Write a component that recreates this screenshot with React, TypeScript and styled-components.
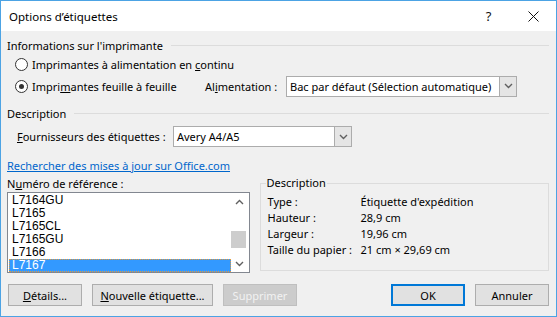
import React from "react";
import styled, { createGlobalStyle } from "styled-components";

const UI_FONT = `"Noto Sans", "Liberation Sans", sans-serif`;

const GlobalStyle = createGlobalStyle`
  * {
    box-sizing: border-box;
  }

  body {
    margin: 0;
    background: #ffffff;
    font-family: ${UI_FONT};
    font-size: 11px;
    color: #000000;
  }
`;

const Window = styled.div`
  width: 557px;
  height: 317px;
  border: 1px solid #4ca3e4;
  display: flex;
  flex-direction: column;
  background: #f0f0f0;
`;

const TitleBar = styled.header`
  height: 30px;
  background: #ffffff;
  display: flex;
  align-items: center;
  padding-left: 8px;
  font-size: 11.5px;
`;

const Title = styled.span`
  flex: 1;
`;

const TitleButton = styled.div`
  width: 45px;
  height: 30px;
  display: flex;
  align-items: center;
  justify-content: center;
  font-size: 13px;
  color: #111;
`;

const Body = styled.main`
  flex: 1;
  display: flex;
  flex-direction: column;
  padding: 0 7px 0 6px;
`;

const GroupHeader = styled.div<{ top: number }>`
  height: 16px;
  margin-top: ${(p) => p.top}px;
  display: flex;
  align-items: center;

  &::after {
    content: "";
    flex: 1;
    height: 1px;
    margin-left: 8px;
    background: #dcdcdc;
  }
`;

const Row = styled.div<{ h: number; indent?: number }>`
  height: ${(p) => p.h}px;
  display: flex;
  align-items: center;
  padding-left: ${(p) => p.indent || 0}px;
`;

const RadioLabel = styled.label<{ w?: number }>`
  display: flex;
  align-items: center;
  gap: 4px;
  width: ${(p) => (p.w ? `${p.w}px` : "auto")};
`;

const RadioCircle = styled.span<{ checked?: boolean }>`
  width: 13px;
  height: 13px;
  border-radius: 50%;
  border: 1px solid #333333;
  background: #ffffff;
  display: flex;
  align-items: center;
  justify-content: center;

  &::after {
    content: "";
    width: 5px;
    height: 5px;
    border-radius: 50%;
    background: ${(p) => (p.checked ? "#333333" : "transparent")};
  }
`;

const FieldLabel = styled.span<{ w: number }>`
  width: ${(p) => p.w}px;
`;

const Combo = styled.div<{ w: number }>`
  width: ${(p) => p.w}px;
  height: 21px;
  border: 1px solid #acacac;
  background: #ffffff;
  display: flex;
  align-items: stretch;
`;

const ComboText = styled.span`
  flex: 1;
  padding-left: 3px;
  display: flex;
  align-items: center;
`;

const ComboArrow = styled.span`
  width: 17px;
  background: #e5e5e5;
  border-left: 1px solid #acacac;
  display: flex;
  align-items: center;
  justify-content: center;
`;

const Link = styled.a`
  color: #0066cc;
  text-decoration: underline;
  height: 16px;
  margin-top: 10px;
  display: flex;
  align-items: center;
  align-self: flex-start;
`;

const Lower = styled.section`
  display: flex;
  gap: 10px;
  margin-top: 2px;
`;

const LeftColumn = styled.div`
  width: 243px;
  display: flex;
  flex-direction: column;
`;

const Caption = styled.div`
  height: 16px;
  display: flex;
  align-items: center;
`;

const ListBox = styled.div`
  margin-top: 1px;
  height: 81px;
  border: 1px solid #828790;
  background: #ffffff;
  display: flex;
`;

const Items = styled.ul`
  flex: 1;
  list-style: none;
  margin: 0;
  padding: 1px 0 0 1px;
  font-family: "Liberation Sans", sans-serif;
  font-size: 12px;
`;

const Item = styled.li<{ selected?: boolean }>`
  height: 13px;
  line-height: 13px;
  padding-left: 3px;
  background: ${(p) => (p.selected ? "#3399ff" : "transparent")};
  color: ${(p) => (p.selected ? "#ffffff" : "#000000")};
  outline: ${(p) => (p.selected ? "1px dotted #e39a3b" : "none")};
  outline-offset: -1px;
`;

const ScrollBar = styled.div`
  width: 17px;
  display: flex;
  flex-direction: column;
  margin-right: 1px;
  background: #ffffff;
`;

const ScrollArrow = styled.div`
  height: 17px;
  display: flex;
  align-items: center;
  justify-content: center;
`;

const ScrollTrack = styled.div`
  flex: 1;
  display: flex;
  flex-direction: column;
`;

const ScrollThumb = styled.div`
  margin-top: 21px;
  height: 17px;
  width: 15px;
  background: #cdcdcd;
`;

const GroupBox = styled.fieldset`
  width: 290px;
  height: 96px;
  margin: 0;
  padding: 2px 7px 0 7px;
  border: 1px solid #dcdcdc;
  min-width: 0;
`;

const Legend = styled.legend`
  padding: 0 1px;
  margin-left: -2px;
  line-height: 16px;
`;

const InfoGrid = styled.dl`
  margin: 0;
  display: grid;
  grid-template-columns: 93px auto;
  grid-auto-rows: 16px;
  align-items: center;

  dt,
  dd {
    margin: 0;
  }
`;

const ButtonBar = styled.footer`
  margin-top: 11px;
  display: flex;
  gap: 10px;
  padding-left: 1px;
`;

const Button = styled.button<{ w: number; primary?: boolean }>`
  width: ${(p) => p.w}px;
  height: 22px;
  padding: 0;
  font-family: ${UI_FONT};
  font-size: 11px;
  color: #000000;
  background: #e1e1e1;
  border: ${(p) => (p.primary ? "2px solid #0078d7" : "1px solid #adadad")};

  &:disabled {
    background: #cccccc;
    border-color: #bfbfbf;
    color: #f2f2f2;
  }
`;

const Spacer = styled.div`
  flex: 1;
`;

const Chevron = ({ up }: { up?: boolean }) => (
  <svg width="9" height="6" viewBox="0 0 9 6">
    <path
      d={up ? "M1 5 L4.5 1.5 L8 5" : "M1 1 L4.5 4.5 L8 1"}
      fill="none"
      stroke="#606060"
      strokeWidth="1.4"
    />
  </svg>
);

const CloseIcon = () => (
  <svg width="11" height="11" viewBox="0 0 11 11">
    <path d="M0.5 0.5 L10.5 10.5 M10.5 0.5 L0.5 10.5" stroke="#111" strokeWidth="1" />
  </svg>
);

const items = ["L7164GU", "L7165", "L7165CL", "L7165GU", "L7166", "L7167"];

const details: [string, string][] = [
  ["Type :", "Étiquette d'expédition"],
  ["Hauteur :", "28,9 cm"],
  ["Largeur :", "19,96 cm"],
  ["Taille du papier :", "21 cm × 29,69 cm"],
];

export default function App() {
  return (
    <>
      <GlobalStyle />
      <Window>
        <TitleBar>
          <Title>Options d’étiquettes</Title>
          <TitleButton>?</TitleButton>
          <TitleButton>
            <CloseIcon />
          </TitleButton>
        </TitleBar>
        <Body>
          <GroupHeader top={6}>Informations sur l'imprimante</GroupHeader>
          <Row h={22} indent={8}>
            <RadioLabel>
              <RadioCircle />
              <span>
                Imprimantes à alimentation en <u>c</u>ontinu
              </span>
            </RadioLabel>
          </Row>
          <Row h={22} indent={8}>
            <RadioLabel w={190}>
              <RadioCircle checked />
              <span>
                Impri<u>m</u>antes feuille à feuille
              </span>
            </RadioLabel>
            <FieldLabel w={81}>
              Al<u>i</u>mentation :
            </FieldLabel>
            <Combo w={231}>
              <ComboText>Bac par défaut (Sélection automatique)</ComboText>
              <ComboArrow>
                <Chevron />
              </ComboArrow>
            </Combo>
          </Row>
          <GroupHeader top={8}>Description</GroupHeader>
          <Row h={21} indent={10} style={{ marginTop: 5 }}>
            <FieldLabel w={156}>
              <u>F</u>ournisseurs des étiquettes :
            </FieldLabel>
            <Combo w={179}>
              <ComboText>Avery A4/A5</ComboText>
              <ComboArrow>
                <Chevron />
              </ComboArrow>
            </Combo>
          </Row>
          <Link href="#">Rechercher des mises à jour sur Office.com</Link>
          <Lower>
            <LeftColumn>
              <Caption>
                N<u>u</u>méro de référence :
              </Caption>
              <ListBox>
                <Items>
                  {items.map((it) => (
                    <Item key={it} selected={it === "L7167"}>
                      {it}
                    </Item>
                  ))}
                </Items>
                <ScrollBar>
                  <ScrollArrow>
                    <Chevron up />
                  </ScrollArrow>
                  <ScrollTrack>
                    <ScrollThumb />
                  </ScrollTrack>
                  <ScrollArrow>
                    <Chevron />
                  </ScrollArrow>
                </ScrollBar>
              </ListBox>
            </LeftColumn>
            <GroupBox>
              <Legend>Description</Legend>
              <InfoGrid>
                {details.map(([k, v]) => (
                  <React.Fragment key={k}>
                    <dt>{k}</dt>
                    <dd>{v}</dd>
                  </React.Fragment>
                ))}
              </InfoGrid>
            </GroupBox>
          </Lower>
          <ButtonBar>
            <Button w={74}>
              <u>D</u>étails...
            </Button>
            <Button w={121}>
              <u>N</u>ouvelle étiquette...
            </Button>
            <Button w={74} disabled>
              Supprimer
            </Button>
            <Spacer />
            <Button w={74} primary>
              OK
            </Button>
            <Button w={74}>Annuler</Button>
          </ButtonBar>
        </Body>
      </Window>
    </>
  );
}
